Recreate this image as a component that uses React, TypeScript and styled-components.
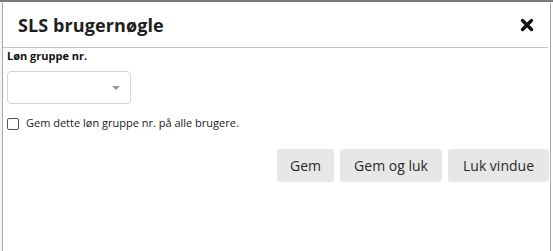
import React from "react";
import styled, { createGlobalStyle } from "styled-components";

const Global = createGlobalStyle`
  html, body { margin: 0; padding: 0; }
  body {
    width: 553px;
    height: 251px;
    overflow: hidden;
    background: #eef1f5;
    font-family: "Open Sans", "Liberation Sans", sans-serif;
  }
`;

const Page = styled.div`
  position: relative;
  width: 553px;
  height: 251px;
  border-top: 2px solid #7a7a7a;
  box-sizing: border-box;
  background: linear-gradient(to right, #f4f4f4 0 3px, #ffffff 3px);
`;

const Dialog = styled.div`
  position: absolute;
  left: 2px;
  top: 1px;
  width: 549px;
  height: 260px;
  box-sizing: border-box;
  background: #fff;
  border-left: 1px solid #a8a8a8;
  border-right: 1px solid #a8a8a8;
  display: flex;
  flex-direction: column;
`;

const Header = styled.div`
  display: flex;
  align-items: center;
  justify-content: space-between;
  height: 44px;
  padding: 0 14px 0 15px;
  border-bottom: 1px solid #c4c4c4;
  margin-right: 2px;
`;

const Title = styled.h1`
  margin: 0;
  font-size: 18px;
  font-weight: 700;
  color: #1e1e1e;
  letter-spacing: 0.1px;
`;

const Close = styled.button`
  border: 0;
  background: none;
  padding: 0;
  width: 14px;
  height: 14px;
  display: flex;
  cursor: pointer;
`;

const Body = styled.div`
  display: flex;
  flex-direction: column;
  padding: 1px 0 0 4px;
`;

const Label = styled.label`
  font-size: 11px;
  font-weight: 700;
  color: #111;
  line-height: 14px;
`;

const Select = styled.div`
  margin-top: 8px;
  width: 124px;
  height: 33px;
  box-sizing: border-box;
  border: 1px solid #d4d4d4;
  border-radius: 4px;
  display: flex;
  align-items: center;
  justify-content: flex-end;
  padding-right: 10px;
`;

const Caret = styled.span`
  width: 0;
  height: 0;
  border-left: 4px solid transparent;
  border-right: 4px solid transparent;
  border-top: 4px solid #999;
`;

const CheckRow = styled.label`
  display: flex;
  align-items: center;
  gap: 7px;
  margin-top: 11px;
  font-size: 11px;
  line-height: 15px;
  color: #1a1a1a;
`;

const Box = styled.span`
  width: 12px;
  height: 12px;
  box-sizing: border-box;
  border: 1px solid #555;
  border-radius: 2px;
  background: #fff;
  margin-top: 3px;
`;

const Actions = styled.div`
  display: flex;
  justify-content: flex-end;
  gap: 6px;
  padding: 19px 1px 0 0;
`;

const Btn = styled.button<{ $w: number }>`
  width: ${(p) => p.$w}px;
  height: 33px;
  border: 0;
  border-radius: 3px;
  background: #e7e7e7;
  color: #2a2a2a;
  font-family: "Open Sans", "Liberation Sans", sans-serif;
  font-size: 14px;
  padding: 0;
`;

export default function App() {
  return (
    <>
      <Global />
      <Page>
        <Dialog>
          <Header>
            <Title>SLS brugernøgle</Title>
            <Close aria-label="Luk">
              <svg width="14" height="14" viewBox="0 0 14 14">
                <path d="M2.5 2.5 L11.5 11.5 M11.5 2.5 L2.5 11.5" stroke="#111" strokeWidth="3.4" strokeLinecap="round" />
              </svg>
            </Close>
          </Header>
          <Body>
            <Label>Løn gruppe nr.</Label>
            <Select>
              <Caret />
            </Select>
            <CheckRow>
              <Box />
              Gem dette løn gruppe nr. på alle brugere.
            </CheckRow>
            <Actions>
              <Btn $w={57}>Gem</Btn>
              <Btn $w={102}>Gem og luk</Btn>
              <Btn $w={101}>Luk vindue</Btn>
            </Actions>
          </Body>
        </Dialog>
      </Page>
    </>
  );
}
